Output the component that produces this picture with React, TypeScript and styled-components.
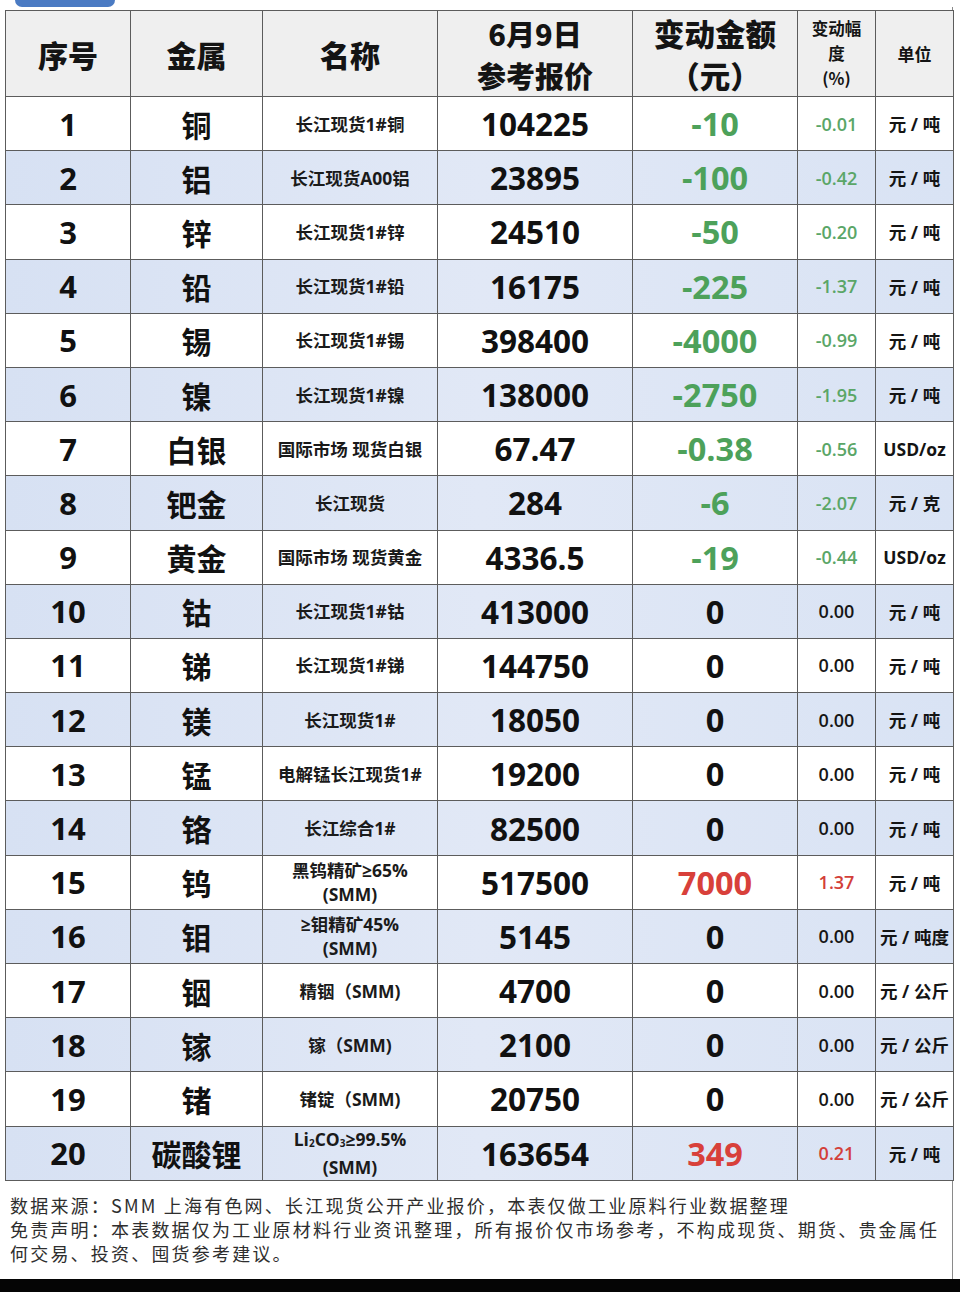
import React from "react";
import styled, { createGlobalStyle } from "styled-components";

const GlobalStyle = createGlobalStyle`
  html, body {
    margin: 0;
    padding: 0;
    background: #ffffff;
  }
  body {
    font-family: "Open Sans", "Noto Sans CJK SC", sans-serif;
    color: #111;
  }
`;

const Sub = styled.span`
  font-size: 10px;
  vertical-align: -1px;
`;

type Row = {
  no: number;
  metal: string;
  name: React.ReactNode;
  price: string;
  change: string;
  pct: string;
  unit: string;
};

const rows: Row[] = [
  { no: 1, metal: "铜", name: "长江现货1#铜", price: "104225", change: "-10", pct: "-0.01", unit: "元 / 吨" },
  { no: 2, metal: "铝", name: "长江现货A00铝", price: "23895", change: "-100", pct: "-0.42", unit: "元 / 吨" },
  { no: 3, metal: "锌", name: "长江现货1#锌", price: "24510", change: "-50", pct: "-0.20", unit: "元 / 吨" },
  { no: 4, metal: "铅", name: "长江现货1#铅", price: "16175", change: "-225", pct: "-1.37", unit: "元 / 吨" },
  { no: 5, metal: "锡", name: "长江现货1#锡", price: "398400", change: "-4000", pct: "-0.99", unit: "元 / 吨" },
  { no: 6, metal: "镍", name: "长江现货1#镍", price: "138000", change: "-2750", pct: "-1.95", unit: "元 / 吨" },
  { no: 7, metal: "白银", name: "国际市场 现货白银", price: "67.47", change: "-0.38", pct: "-0.56", unit: "USD/oz" },
  { no: 8, metal: "钯金", name: "长江现货", price: "284", change: "-6", pct: "-2.07", unit: "元 / 克" },
  { no: 9, metal: "黄金", name: "国际市场 现货黄金", price: "4336.5", change: "-19", pct: "-0.44", unit: "USD/oz" },
  { no: 10, metal: "钴", name: "长江现货1#钴", price: "413000", change: "0", pct: "0.00", unit: "元 / 吨" },
  { no: 11, metal: "锑", name: "长江现货1#锑", price: "144750", change: "0", pct: "0.00", unit: "元 / 吨" },
  { no: 12, metal: "镁", name: "长江现货1#", price: "18050", change: "0", pct: "0.00", unit: "元 / 吨" },
  { no: 13, metal: "锰", name: "电解锰长江现货1#", price: "19200", change: "0", pct: "0.00", unit: "元 / 吨" },
  { no: 14, metal: "铬", name: "长江综合1#", price: "82500", change: "0", pct: "0.00", unit: "元 / 吨" },
  {
    no: 15,
    metal: "钨",
    name: (
      <>
        黑钨精矿≥65%
        <br />
        (SMM)
      </>
    ),
    price: "517500",
    change: "7000",
    pct: "1.37",
    unit: "元 / 吨",
  },
  {
    no: 16,
    metal: "钼",
    name: (
      <>
        ≥钼精矿45%
        <br />
        (SMM)
      </>
    ),
    price: "5145",
    change: "0",
    pct: "0.00",
    unit: "元 / 吨度",
  },
  { no: 17, metal: "铟", name: "精铟（SMM)", price: "4700", change: "0", pct: "0.00", unit: "元 / 公斤" },
  { no: 18, metal: "镓", name: "镓（SMM)", price: "2100", change: "0", pct: "0.00", unit: "元 / 公斤" },
  { no: 19, metal: "锗", name: "锗锭（SMM)", price: "20750", change: "0", pct: "0.00", unit: "元 / 公斤" },
  {
    no: 20,
    metal: "碳酸锂",
    name: (
      <>
        Li<Sub>2</Sub>CO<Sub>3</Sub>≥99.5%
        <br />
        (SMM)
      </>
    ),
    price: "163654",
    change: "349",
    pct: "0.21",
    unit: "元 / 吨",
  },
];

type Tone = "down" | "up" | "flat";

const toneOf = (v: string): Tone => (v.startsWith("-") ? "down" : Number(v) === 0 ? "flat" : "up");

const Page = styled.div`
  width: 960px;
  height: 1292px;
  display: flex;
  flex-direction: column;
  overflow: hidden;
`;

const TopTab = styled.div`
  margin-left: 15px;
  width: 100px;
  height: 7px;
  border-radius: 0 0 12px 12px;
  background: #4b7bc3;
`;

const Frame = styled.div`
  flex: 1;
  width: 953px;
  box-sizing: border-box;
  border-right: 1.5px solid #8a8a8a;
  padding: 3px 0 0 5px;
  display: flex;
  flex-direction: column;
`;

const Table = styled.table`
  width: 948px;
  border-collapse: collapse;
  table-layout: fixed;
`;

const Col = styled.col<{ $w: number }>`
  width: ${(p) => p.$w}px;
`;

const HeadRow = styled.tr`
  height: 86px;
  background: #efefef;
`;

const Th = styled.th<{ $size?: number; $lh?: number; $heavy?: boolean }>`
  border: 1.5px solid #5c5c5c;
  padding: 0;
  text-align: center;
  vertical-align: middle;
  font-family: "Noto Sans CJK SC", sans-serif;
  font-weight: ${(p) => (p.$heavy ? 900 : 700)};
  font-size: ${(p) => p.$size ?? 30}px;
  line-height: ${(p) => p.$lh ?? 40}px;
  color: #141414;
`;

const BodyRow = styled.tr<{ $alt: boolean }>`
  height: 54.2px;
  background: ${(p) =>
    p.$alt ? "linear-gradient(90deg, #d7e1f3 0%, #e1e8f6 50%, #d9e3f4 100%)" : "#ffffff"};
`;

const Td = styled.td`
  border: 1.5px solid #5c5c5c;
  padding: 0;
  text-align: center;
  vertical-align: middle;
`;

const NoCell = styled(Td)`
  font-family: "Open Sans", sans-serif;
  font-weight: 700;
  font-size: 31px;
  color: #111;
`;

const MetalCell = styled(Td)`
  font-family: "Noto Sans CJK SC", sans-serif;
  font-weight: 700;
  font-size: 30px;
  color: #111;
`;

const NameCell = styled(Td)`
  font-family: "Open Sans", "Noto Sans CJK SC", sans-serif;
  font-weight: 700;
  font-size: 17.5px;
  line-height: 24px;
  color: #1a1a1a;
`;

const PriceCell = styled(Td)`
  font-family: "Open Sans", sans-serif;
  font-weight: 700;
  font-size: 31.5px;
  color: #111;
`;

const ChangeCell = styled(Td)<{ $tone: Tone }>`
  font-family: "Open Sans", sans-serif;
  font-weight: 700;
  font-size: 32.5px;
  color: ${(p) => (p.$tone === "down" ? "#4da15a" : p.$tone === "up" ? "#d8403a" : "#111")};
`;

const PctCell = styled(Td)<{ $tone: Tone }>`
  font-family: "Open Sans", sans-serif;
  font-weight: 600;
  font-size: 18px;
  color: ${(p) => (p.$tone === "down" ? "#5aa667" : p.$tone === "up" ? "#d33f39" : "#161616")};
`;

const UnitCell = styled(Td)`
  font-family: "Open Sans", "Noto Sans CJK SC", sans-serif;
  font-weight: 700;
  font-size: 17.5px;
  color: #141414;
  white-space: nowrap;
`;

const Notes = styled.div`
  padding: 12px 0 0 5px;
  font-family: "Noto Sans CJK SC", sans-serif;
  font-weight: 400;
  font-size: 18px;
  line-height: 24px;
  letter-spacing: 2.2px;
  color: #2e2e2e;
`;

const NoteLine = styled.div`
  white-space: nowrap;
`;

const BottomBar = styled.div`
  height: 13px;
  background: #050505;
`;

export default function App() {
  return (
    <Page>
      <GlobalStyle />
      <TopTab />
      <Frame>
        <Table>
          <colgroup>
            <Col $w={125} />
            <Col $w={132} />
            <Col $w={175} />
            <Col $w={195} />
            <Col $w={165} />
            <Col $w={78} />
            <Col $w={78} />
          </colgroup>
          <thead>
            <HeadRow>
              <Th $heavy>序号</Th>
              <Th $heavy>金属</Th>
              <Th $heavy>名称</Th>
              <Th $heavy $size={29} $lh={42}>
                6月9日
                <br />
                参考报价
              </Th>
              <Th $heavy $size={30.5} $lh={42}>
                变动金额
                <br />
                （元）
              </Th>
              <Th $size={16.5} $lh={25}>
                变动幅
                <br />
                度
                <br />
                (%)
              </Th>
              <Th $size={17}>单位</Th>
            </HeadRow>
          </thead>
          <tbody>
            {rows.map((r) => (
              <BodyRow key={r.no} $alt={r.no % 2 === 0}>
                <NoCell>{r.no}</NoCell>
                <MetalCell>{r.metal}</MetalCell>
                <NameCell>{r.name}</NameCell>
                <PriceCell>{r.price}</PriceCell>
                <ChangeCell $tone={toneOf(r.change)}>{r.change}</ChangeCell>
                <PctCell $tone={toneOf(r.pct)}>{r.pct}</PctCell>
                <UnitCell>{r.unit}</UnitCell>
              </BodyRow>
            ))}
          </tbody>
        </Table>
        <Notes>
          <NoteLine>数据来源：SMM 上海有色网、长江现货公开产业报价，本表仅做工业原料行业数据整理</NoteLine>
          <NoteLine>免责声明：本表数据仅为工业原材料行业资讯整理，所有报价仅市场参考，不构成现货、期货、贵金属任</NoteLine>
          <NoteLine>何交易、投资、囤货参考建议。</NoteLine>
        </Notes>
      </Frame>
      <BottomBar />
    </Page>
  );
}
